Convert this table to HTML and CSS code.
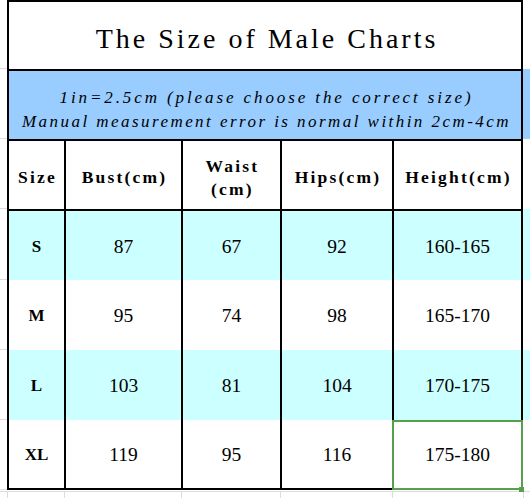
FILE: index.html
```html
<!DOCTYPE html>
<html>
<head>
<meta charset="utf-8">
<link rel="stylesheet" href="styles.css">
</head>
<body>
<div class="sheet">
  <div class="m"></div>
  <div class="title">The Size of Male Charts</div>
  <div class="t"></div>

  <div class="m"></div>
  <div class="band"><p>1in=2.5cm (please choose the correct size)</p><p class="wide">Manual measurement error is normal within 2cm-4cm</p></div>
  <div class="t blue"></div>

  <div class="m"></div>
  <div class="c h top">Size</div>
  <div class="c h top">Bust(cm)</div>
  <div class="c h top">Waist<br>(cm)</div>
  <div class="c h top">Hips(cm)</div>
  <div class="c h top last">Height(cm)</div>
  <div class="t"></div>

  <div class="m"></div>
  <div class="c s top cyan">S</div>
  <div class="c n top cyan">87</div>
  <div class="c n top cyan">67</div>
  <div class="c n top cyan">92</div>
  <div class="c n top cyan last">160-165</div>
  <div class="t cyan"></div>

  <div class="m"></div>
  <div class="c s">M</div>
  <div class="c n">95</div>
  <div class="c n">74</div>
  <div class="c n">98</div>
  <div class="c n last">165-170</div>
  <div class="t"></div>

  <div class="m"></div>
  <div class="c s cyan">L</div>
  <div class="c n cyan">103</div>
  <div class="c n cyan">81</div>
  <div class="c n cyan">104</div>
  <div class="c n cyan last">170-175</div>
  <div class="t cyan"></div>

  <div class="m"></div>
  <div class="c s bottom">XL</div>
  <div class="c n bottom">119</div>
  <div class="c n bottom">95</div>
  <div class="c n bottom">116</div>
  <div class="c n bottom last selected">175-180</div>
  <div class="t"></div>

  <div class="g first"></div>
  <div class="g"></div>
  <div class="g"></div>
  <div class="g"></div>
  <div class="g"></div>
  <div class="g"></div>
  <div class="g"></div>
</div>
</body>
</html>
```

FILE: styles.css
```css
html, body {
  margin: 0;
  padding: 0;
  background: #ffffff;
}

body {
  width: 530px;
  height: 498px;
  overflow: hidden;
  color: #000;
}

.sheet {
  display: grid;
  grid-template-columns: 7px 57px 117px 99px 112px 131px 1fr;
  grid-template-rows: 69px 70px 70px 71px 70px 70px 70px 1fr;
  width: 530px;
  height: 498px;
}

.sheet > div {
  box-sizing: border-box;
}

.m {
  border-bottom: 1px solid #dcdcdc;
}

.t {
  background: #fff;
}

.blue {
  background: #99ccff;
}

.cyan {
  background: #ccffff;
}

.title {
  grid-column: 2 / 7;
  border: 2px solid #000;
  border-bottom: none;
  display: flex;
  align-items: center;
  justify-content: center;
  padding-top: 6px;
  padding-left: 4px;
  font-family: "Liberation Serif", serif;
  font-size: 28px;
  letter-spacing: 3px;
}

.band {
  grid-column: 2 / 7;
  border: 2px solid #000;
  border-bottom: none;
  background: #99ccff;
  display: flex;
  flex-direction: column;
  align-items: center;
  justify-content: center;
  padding-top: 9px;
  padding-left: 3px;
  font-family: "Liberation Serif", serif;
  font-style: italic;
  font-size: 17px;
  line-height: 24px;
  letter-spacing: 2.9px;
}

.band p {
  margin: 0;
  white-space: nowrap;
}

.band p.wide {
  letter-spacing: 2.45px;
}

.c {
  border-left: 2px solid #000;
  display: flex;
  align-items: center;
  justify-content: center;
  text-align: center;
}

.c.last {
  border-right: 2px solid #000;
}

.c.top {
  border-top: 2px solid #000;
}

.c.bottom {
  border-bottom: 2px solid #000;
}

.h {
  font-family: "Liberation Serif", serif;
  font-weight: bold;
  font-size: 17.5px;
  letter-spacing: 2.2px;
  line-height: 23px;
  padding-top: 5px;
  padding-left: 2px;
}

.s {
  font-family: "Liberation Serif", serif;
  font-weight: bold;
  font-size: 17px;
  padding-top: 2px;
}

.n {
  font-family: "Liberation Serif", serif;
  font-size: 19.5px;
  padding-top: 2px;
}

.selected {
  position: relative;
}

.selected::after {
  content: "";
  position: absolute;
  left: -2px;
  top: 0;
  right: -2px;
  bottom: -2px;
  border: 2px solid #55a04a;
}

.selected::before {
  content: "";
  position: absolute;
  right: -3px;
  bottom: -4px;
  width: 5px;
  height: 5px;
  background: #55a04a;
  z-index: 2;
}

.g {
  border-top: 1px solid #dcdcdc;
  border-left: 1px solid #dcdcdc;
  margin-top: 1px;
}

.g.first {
  border-left: none;
}
```
